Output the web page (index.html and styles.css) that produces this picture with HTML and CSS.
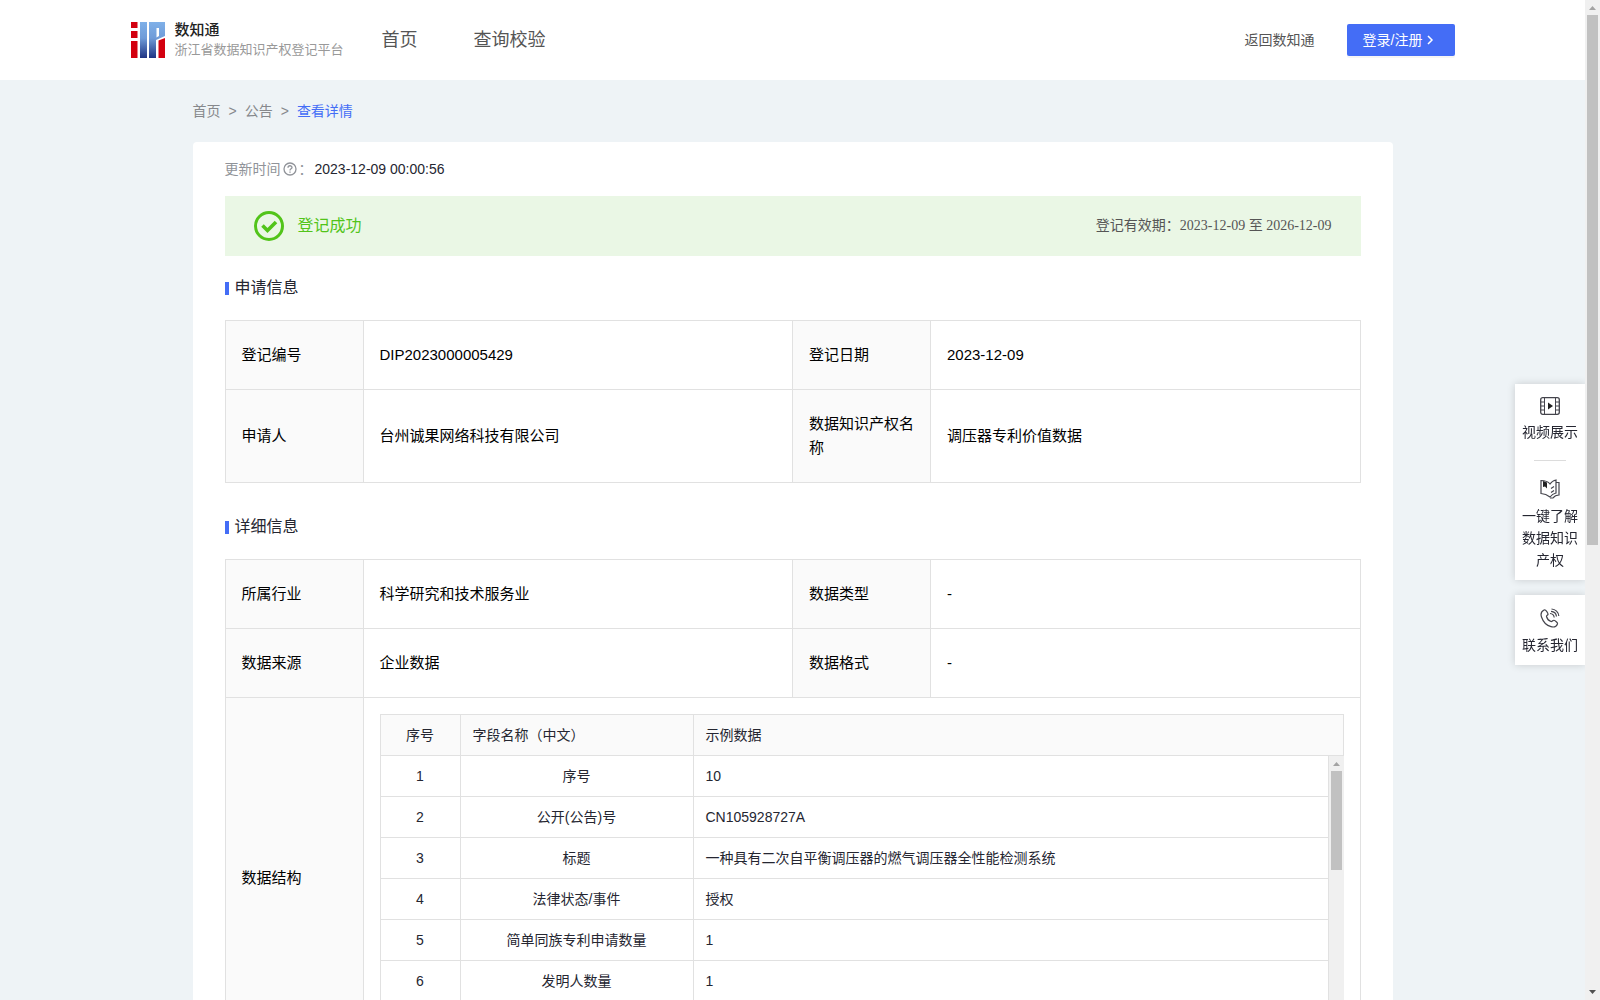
FILE: index.html
```html
<!DOCTYPE html>
<html lang="zh-CN">
<head>
    <meta charset="UTF-8">
    <meta name="viewport" content="width=device-width, initial-scale=1.0">
    <title>浙江省数据知识产权登记平台</title>
    <link rel="stylesheet" href="styles.css">
</head>
<body>
    <header class="header">
        <div class="header-inner">
            <a class="logo" href="#">
                <svg class="logo-mark" width="34" height="36" viewBox="0 0 34 36">
                    <defs>
                        <linearGradient id="blue" x1="0" y1="0" x2="0" y2="36" gradientUnits="userSpaceOnUse">
                            <stop offset="0" stop-color="#7fb0e8"/>
                            <stop offset="0.45" stop-color="#6f9bd8"/>
                            <stop offset="1" stop-color="#1f3483"/>
                        </linearGradient>
                    </defs>
                    <path fill="#d3000f" d="M0 0h6.500v6H0zM0 9h6.500v7H0zM0 19h6.500v17H0zM27.500 18.500L34 16v20h-6.500z"/>
                    <path fill="url(#blue)" d="M9 0h7v36H9zM18 0h16v14l-9 4v18h-7z"/>
                    <path fill="#fff" d="M25.500 6h2.500v8l-2.500 1.500z"/>
                </svg>
                <span class="logo-text">
                    <strong>数知通</strong>
                    <span>浙江省数据知识产权登记平台</span>
                </span>
            </a>
            <nav class="nav">
                <a href="#">首页</a>
                <a href="#">查询校验</a>
            </nav>
            <div class="header-right">
                <a href="#">返回数知通</a>
                <button class="login-btn" type="button">登录/注册
                    <svg width="8" height="10" viewBox="0 0 8 10"><path d="M2 1l4 4-4 4" fill="none" stroke="#fff" stroke-width="1.500"/></svg>
                </button>
            </div>
        </div>
    </header>

    <main class="main">
        <nav class="breadcrumb">
            <a href="#">首页</a><span>&gt;</span><a href="#">公告</a><span>&gt;</span><a class="current" href="#">查看详情</a>
        </nav>

        <div class="card">
            <div class="update-time">
                <span>更新时间</span>
                <svg width="14" height="14" viewBox="0 0 14 14" fill="none" stroke="#909399">
                    <circle cx="7" cy="7" r="6" stroke-width="1.300"/>
                    <path d="M5 5.700c0-2.600 4-2.500 4-.2C9 6.800 7 6.800 7 8.500M7 9.500v1.200" stroke-width="1.300"/>
                </svg>
                <span class="colon">：</span>
                <time>2023-12-09 00:00:56</time>
            </div>

            <div class="status">
                <svg width="30" height="30" viewBox="0 0 30 30" fill="none" stroke="#52c41a">
                    <circle cx="15" cy="15" r="13.500" stroke-width="3"/>
                    <path d="M8.500 14.500l5 5 8.500-8.500" stroke-width="3.600"/>
                </svg>
                <span class="status-name">登记成功</span>
                <span class="status-period">登记有效期：2023-12-09 至 2026-12-09</span>
            </div>

            <h2 class="title">申请信息</h2>
            <table class="info">
                <tr>
                    <th>登记编号</th>
                    <td>DIP2023000005429</td>
                    <th>登记日期</th>
                    <td>2023-12-09</td>
                </tr>
                <tr>
                    <th>申请人</th>
                    <td>台州诚果网络科技有限公司</td>
                    <th>数据知识产权名称</th>
                    <td>调压器专利价值数据</td>
                </tr>
            </table>

            <h2 class="title">详细信息</h2>
            <table class="info">
                <tr>
                    <th>所属行业</th>
                    <td>科学研究和技术服务业</td>
                    <th>数据类型</th>
                    <td>-</td>
                </tr>
                <tr>
                    <th>数据来源</th>
                    <td>企业数据</td>
                    <th>数据格式</th>
                    <td>-</td>
                </tr>
                <tr>
                    <th>数据结构</th>
                    <td class="nested" colspan="3">
                        <table class="fields fields-head">
                            <tr><th class="no">序号</th><th class="name">字段名称（中文）</th><th>示例数据</th></tr>
                        </table>
                        <div class="fields-scroll">
                            <table class="fields">
                                <tr><td class="no">1</td><td class="name">序号</td><td>10</td></tr>
                                <tr><td class="no">2</td><td class="name">公开(公告)号</td><td>CN105928727A</td></tr>
                                <tr><td class="no">3</td><td class="name">标题</td><td>一种具有二次自平衡调压器的燃气调压器全性能检测系统</td></tr>
                                <tr><td class="no">4</td><td class="name">法律状态/事件</td><td>授权</td></tr>
                                <tr><td class="no">5</td><td class="name">简单同族专利申请数量</td><td>1</td></tr>
                                <tr><td class="no">6</td><td class="name">发明人数量</td><td>1</td></tr>
                            </table>
                            <div class="scrollbar">
                                <svg width="15" height="15" viewBox="0 0 15 15"><path d="M4 10h7L7.500 6z" fill="#a3a3a3"/></svg>
                                <div class="track"><div class="thumb" style="height: 38.7%"></div></div>
                                <svg width="15" height="15" viewBox="0 0 15 15"><path d="M4 5h7L7.500 9z" fill="#505050"/></svg>
                            </div>
                        </div>
                    </td>
                </tr>
            </table>
        </div>
    </main>

    <aside class="side">
        <div class="side-box">
            <a href="#">
                <svg width="20" height="18" viewBox="0 0 20 18" fill="none" stroke="#44444c">
                    <rect x="0.700" y="0.700" width="18.600" height="16.600" rx="2" stroke-width="1.300"/>
                    <path d="M4.500 1v16M15.500 1v16M1 5h3M1 9h3M1 13h3M16 5h3M16 9h3M16 13h3"/>
                    <path d="M8 5.500v7l5-3.500z" fill="#222" stroke="none"/>
                </svg>
                <span>视频展示</span>
            </a>
            <a href="#">
                <svg width="20" height="20" viewBox="0 0 20 20" fill="none" stroke="#44444c" stroke-width="1.200">
                    <path d="M1 1.500C4.500 1.500 8 2.500 10 5c1.500-2.300 3.500-3.600 6-4v13c-2.500.5-4.500 2-6 4-2.500-2-5.500-3.300-9-3.500z"/>
                    <path d="M16 3.500h3v12.500c-2.500 0-4.500 1-6 3h-3M11 9.500l3-2M11 13.500l3-2"/>
                    <path d="M3 2l4 1.500v6l-2-2-2 .5z" fill="#222" stroke="none"/>
                </svg>
                <span>一键了解数据知识产权</span>
            </a>
        </div>
        <div class="side-box">
            <a href="#">
                <svg width="20" height="20" viewBox="0 0 20 20" fill="none" stroke="#44444c" stroke-width="1.200">
                    <path d="M4 2C1 3.500.5 6 1.500 9c1.500 4.500 5 8.500 9.500 9.700 3 .8 5.500-.2 6.500-3 .3-1-3-3.700-4-3.400-1 .2-1.500 1.500-2.500 1.200C9 12.800 7 10.500 6.500 8.500c-.2-1 1.300-1.200 1.500-2C8.200 5.500 6 1.200 4 2z"/>
                    <path d="M10 5.500c2.200.2 4 1.800 4.200 4M11 3.300c3 .2 5.200 2.500 5.500 5.200M11.500 1c4 .2 7 3.200 7.300 7"/>
                </svg>
                <span>联系我们</span>
            </a>
        </div>
    </aside>

    <div class="scrollbar page-scrollbar">
        <svg width="15" height="15" viewBox="0 0 15 15"><path d="M4 10h7L7.500 6z" fill="#a3a3a3"/></svg>
        <div class="track"><div class="thumb" style="height: 54.6%"></div></div>
        <svg width="15" height="15" viewBox="0 0 15 15"><path d="M4 5h7L7.500 9z" fill="#505050"/></svg>
    </div>
</body>
</html>
```
FILE: styles.css
```css
* {
    box-sizing: border-box;
}
html {
    scrollbar-width: none;
}
body {
    margin: 0;
    padding-right: 15px;
    background-color: #eef3f6;
    color: #252631;
    font-family: "Liberation Sans", "Noto Sans CJK SC", sans-serif;
    font-size: 14px;
    line-height: 22px;
}
a {
    color: inherit;
    text-decoration: none;
}
svg {
    display: block;
    flex: none;
}
.header {
    background-color: #fff;
}
.header-inner {
    display: flex;
    align-items: center;
    max-width: 1324px;
    height: 80px;
    margin: 0 auto;
    color: #555;
}
.logo {
    display: flex;
    align-items: center;
    gap: 10px;
}
.logo-text {
    display: flex;
    flex-direction: column;
    line-height: 20px;
    font-size: 13px;
    color: #999;
}
.logo-text strong {
    font-size: 15px;
    font-weight: 500;
    color: #222;
}
.nav {
    display: flex;
    gap: 56px;
    margin-left: 38px;
    font-size: 18px;
}
.header-right {
    display: flex;
    align-items: center;
    gap: 32px;
    margin-left: auto;
}
.login-btn {
    display: flex;
    align-items: center;
    gap: 4px;
    width: 108px;
    height: 32px;
    padding: 0 16px;
    border: 0;
    border-radius: 2px;
    background-color: #446df6;
    box-shadow: 0 2px 0 rgba(0, 0, 0, 0.04);
    color: #fff;
    font: inherit;
    white-space: nowrap;
    cursor: pointer;
}
.main {
    max-width: 1200px;
    margin: 0 auto;
    padding-bottom: 32px;
}
.breadcrumb {
    display: flex;
    gap: 8px;
    padding: 20px 0;
    color: #86888c;
}
.breadcrumb .current {
    color: #446df6;
}
.card {
    padding: 16px 32px;
    border-radius: 4px;
    background-color: #fff;
}
.update-time {
    display: flex;
    align-items: center;
    gap: 2px;
    color: #909399;
}
.update-time time {
    color: #252631;
}
.status {
    display: flex;
    align-items: center;
    height: 60px;
    margin-top: 16px;
    padding: 0 29px;
    background-color: #eaf7e5;
}
.status-name {
    margin-left: 14px;
    font-size: 16px;
    color: #52c41a;
}
.status-period {
    margin-left: auto;
    font-family: "Liberation Serif", "Noto Sans CJK SC", serif;
    color: #555;
}
.title {
    display: flex;
    align-items: center;
    gap: 6px;
    margin: 20px 0;
    font-size: 16px;
    font-weight: 400;
    line-height: 24px;
}
.title::before {
    content: "";
    width: 4px;
    height: 13px;
    background-color: #446df6;
}
table {
    width: 100%;
    border-collapse: collapse;
    table-layout: fixed;
}
.info {
    margin-bottom: 32px;
    color: #000;
    font-size: 15px;
    line-height: 24px;
}
.info th,
.info td {
    padding: 22px 16px;
    border: 1px solid #e1e1e1;
    font-weight: 400;
    text-align: left;
}
.info th {
    width: 138px;
    background-color: #fafafa;
}
.info .nested {
    padding: 16px;
}
.info .fields {
    color: #252631;
    font-size: 14px;
    line-height: 22px;
}
.info .fields th,
.info .fields td {
    width: auto;
    padding: 9px 12px;
}
.info .fields .no {
    width: 80px;
    text-align: center;
}
.info .fields .name {
    width: 233px;
}
.info .fields td.name {
    text-align: center;
}
.fields-scroll {
    display: flex;
    height: 286px;
}
.fields-scroll .fields {
    flex: 1;
    align-self: flex-start;
}
.info .fields-scroll tr:first-child td {
    border-top: 0;
}
.scrollbar {
    display: flex;
    flex: none;
    flex-direction: column;
    width: 15px;
    background-color: #f0f0f0;
}
.scrollbar .track {
    flex: 1;
    padding: 0 2px;
}
.scrollbar .thumb {
    background-color: #c1c1c1;
}
.page-scrollbar {
    position: fixed;
    top: 0;
    right: 0;
    bottom: 0;
}
.side {
    position: fixed;
    top: 384px;
    right: 15px;
    display: flex;
    flex-direction: column;
    gap: 15px;
    width: 70px;
}
.side-box {
    padding: 0 7px;
    background-color: #fff;
    box-shadow: 0 0 8px rgba(0, 0, 0, 0.16);
    text-align: center;
}
.side-box a {
    display: flex;
    flex-direction: column;
    align-items: center;
    gap: 6px;
    padding: 13px 0 9px;
}
.side-box a + a {
    padding-top: 0;
}
.side-box a + a::before {
    content: "";
    width: 32px;
    height: 1px;
    margin: 8px 0 12px;
    background-color: #dcdcdc;
}
```
